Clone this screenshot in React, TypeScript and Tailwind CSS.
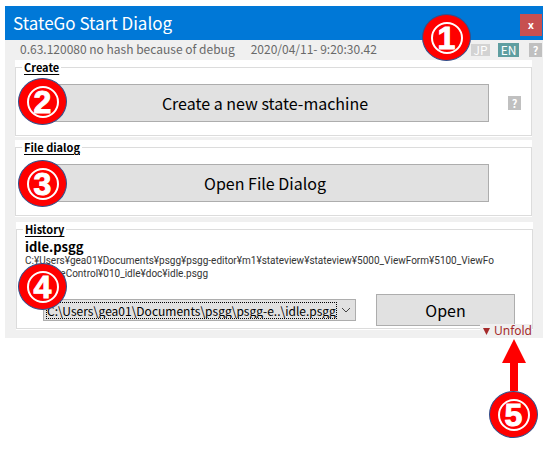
import type { ReactNode } from "react";

function Marker({ n, className = "" }: { n: number; className?: string }) {
  return (
    <div
      className={`flex h-[47px] w-[49px] items-center justify-center rounded-[50%] border border-[#2f528f] bg-[#ff0000] ${className}`}
    >
      <span className="flex size-8 items-center justify-center rounded-full border-2 border-white font-['Liberation_Sans',sans-serif] text-[32px] leading-none font-bold text-white [-webkit-text-stroke:1px_white]">
        {n}
      </span>
    </div>
  );
}

function Group({ title, className = "", children }: { title: string; className?: string; children: ReactNode }) {
  return (
    <section className={`relative bg-white pb-px ${className}`}>
      <fieldset className="min-w-0 border border-[#dcdcdc] px-1.5">
        <legend className="px-0.5 text-[11px] leading-[15px] font-bold text-black underline underline-offset-2">
          {title}
        </legend>
        {children}
      </fieldset>
    </section>
  );
}

const bigButton =
  "border border-[#adadad] bg-[#e1e1e1] text-center font-['Noto_Sans_CJK_JP',sans-serif] text-[16px] leading-none text-black";

export default function App() {
  return (
    <main className="bg-white pt-1.5 pr-[13px] pl-[5px] font-['Noto_Sans_CJK_JP','Noto_Sans',sans-serif]">
      <div className="relative bg-[#f0f0f0] pb-2">
        <header className="flex h-[34px] items-start justify-between bg-[#0078d7] pr-px pl-2">
          <h1 className="text-[17px] leading-[34px] text-white">StateGo Start Dialog</h1>
          <button
            type="button"
            aria-label="Close"
            className="mt-2 h-[22px] w-[22px] bg-[#c75050] font-['Noto_Sans',sans-serif] text-[10px] leading-none font-bold text-white"
          >
            x
          </button>
        </header>

        <div className="flex h-5 items-center pr-px pl-[15px] text-[12px] leading-none text-[#696969]">
          <span className="-mt-0.5 whitespace-nowrap">0.63.120080 no hash because of debug</span>
          <span className="-mt-0.5 ml-4 whitespace-nowrap">2020/04/11- 9:20:30.42</span>
          <button type="button" className="ml-auto h-3 w-[19px] bg-[#d3d3d3] leading-3 text-white">
            JP
          </button>
          <button type="button" className="ml-2 h-3.5 w-[21px] bg-[#5f9ea0] leading-3.5 text-white">
            EN
          </button>
          <button
            type="button"
            aria-label="Help"
            className="ml-2.5 h-3.5 w-[13px] bg-[#c0c0c0] text-[11px] leading-3.5 font-bold text-white"
          >
            ?
          </button>
        </div>

        <div className="pr-[11px] pl-2.5">
          <Group title="Create">
            <div className="flex items-center gap-[19px] pt-[9px] pr-1 pb-[13px] pl-[19px]">
              <button type="button" className={`h-[38px] min-w-0 flex-1 ${bigButton}`}>
                Create a new state-machine
              </button>
              <button
                type="button"
                aria-label="Help"
                className="h-3.5 w-[13px] bg-[#c0c0c0] text-[11px] leading-3.5 font-bold text-white"
              >
                ?
              </button>
            </div>
            <Marker n={2} className="absolute top-[18px] left-[3px]" />
          </Group>

          <Group title="File dialog" className="mt-[3px]">
            <div className="flex pt-[9px] pr-9 pb-[13px] pl-[19px]">
              <button type="button" className={`h-[38px] min-w-0 flex-1 ${bigButton}`}>
                Open File Dialog
              </button>
            </div>
            <Marker n={3} className="absolute top-5 left-[3px]" />
          </Group>

          <Group title="History" className="-mr-px ml-px mt-[5px]">
            <div className="pl-0.5">
              <h2 className="pt-0.5 text-[13px] leading-[15px] font-bold text-black">idle.psgg</h2>
              <p className="font-[Roboto,'Noto_Sans',sans-serif] text-[10px] leading-[13px] text-[#333333]">
                C:¥Users¥gea01¥Documents¥psgg¥psgg-editor¥m1¥stateview¥stateview¥5000_ViewForm¥5100_ViewFo
                <br />
                rm¥StateControl¥010_idle¥doc¥idle.psgg
              </p>
            </div>
            <div className="flex items-center gap-5 pt-3.5 pr-[11px] pb-0.5 pl-5">
              <div className="flex h-[22px] min-w-0 flex-1 items-center border border-[#adadad] bg-[#e1e1e1] pl-0.5">
                <select
                  aria-label="History"
                  className="h-[17px] min-w-0 flex-1 appearance-none border border-dotted border-black bg-transparent text-[12px] leading-[15px] text-black"
                >
                  <option>{"C:\\Users\\gea01\\Documents\\psgg\\psgg-e..\\idle.psgg"}</option>
                </select>
                <svg className="mx-1 h-2.5 w-2.5" viewBox="0 0 10 10" fill="none" stroke="#444" aria-hidden="true">
                  <path d="M1 3 L5 7 L9 3" />
                </svg>
              </div>
              <button type="button" className={`h-8 w-[139px] ${bigButton}`}>
                Open
              </button>
            </div>
            <Marker n={4} className="absolute top-[41px] left-0.5" />
          </Group>
        </div>

        <Marker n={1} className="absolute top-2 right-[72px]" />
        <button
          type="button"
          className="absolute right-[11px] bottom-0 flex h-3.5 items-center gap-1 bg-[#f0f0f0] pl-[3px] font-['Noto_Sans',sans-serif] text-[12px] leading-none text-[#a52a2a]"
        >
          <svg className="size-[7px]" viewBox="0 0 7 7" fill="#a52a2a" aria-hidden="true">
            <path d="M0 0 H7 L3.5 7 Z" />
          </svg>
          Unfold
        </button>
      </div>

      <div className="flex justify-end pt-px pr-[5px]">
        <div className="flex flex-col items-center">
          <svg className="h-[52px] w-6" viewBox="0 0 24 52" fill="#ff0000" aria-hidden="true">
            <path d="M12 0 L24 24 H16 V52 H8 V24 H0 Z" />
          </svg>
          <Marker n={5} />
        </div>
      </div>
    </main>
  );
}
